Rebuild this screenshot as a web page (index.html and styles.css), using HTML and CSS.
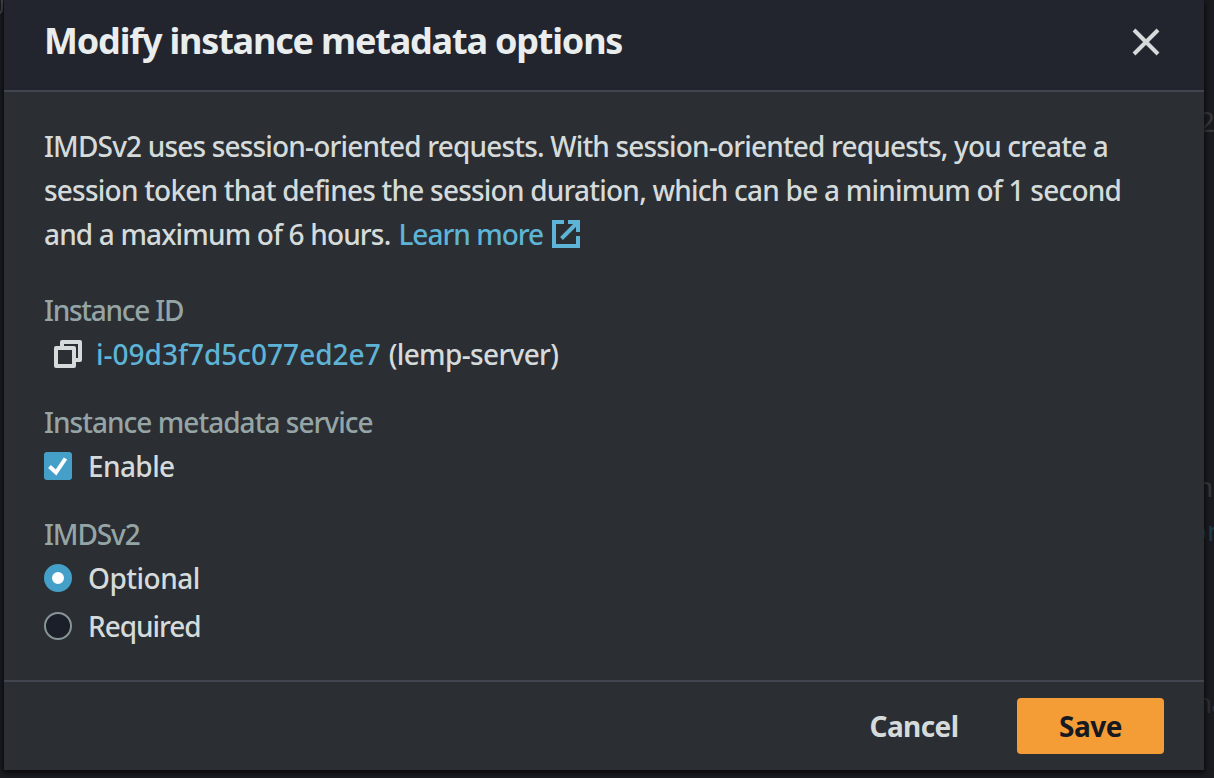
FILE: index.html
```html
<!DOCTYPE html>
<html lang="en">
<head>
<meta charset="utf-8">
<title>Modify instance metadata options</title>
<link rel="stylesheet" href="styles.css">
</head>
<body>
<div class="backdrop" aria-hidden="true">
  <span class="ghost ghost-corner"></span>
  <span class="ghost ghost-two">2</span>
  <span class="ghost ghost-n">n</span>
  <span class="ghost ghost-link">or</span>
  <span class="ghost ghost-na">na</span>
</div>
<main class="modal" role="dialog">
  <header class="modal-header">
    <h1 class="title"><span class="t-title">Modify instance metadata options</span></h1>
    <button class="close" aria-label="Close">
      <svg width="32" height="32" viewBox="0 0 32 32"><path d="M4 4 28 28M28 4 4 28" fill="none" stroke="currentColor" stroke-width="4"/></svg>
    </button>
  </header>
  <section class="modal-body">
    <p class="intro">
      <span class="line t-l1">IMDSv2 uses session-oriented requests. With session-oriented requests, you create a</span>
      <span class="line t-l2">session token that defines the session duration, which can be a minimum of 1 second</span>
      <span class="line last"><span class="t-l3">and a maximum of 6 hours.</span><a class="link learn"><span class="t-learn">Learn more</span><svg width="28" height="28" viewBox="0 0 28 28"><g fill="none" stroke="currentColor" stroke-width="4"><path d="M12 2H2V26H26V16"/><path d="M16 2H26V12M25 3 9.500 18.500"/></g></svg></a></span>
    </p>
    <div class="field">
      <div class="label"><span class="t-id">Instance ID</span></div>
      <div class="value">
        <svg class="copy" width="28" height="28" viewBox="0 0 28 28"><g fill="none" stroke="currentColor" stroke-width="4" stroke-linejoin="round"><path d="M2 8H20V26H2Z"/><path d="M8 8V2H26V20H20"/></g></svg>
        <a class="link t-iid">i-09d3f7d5c077ed2e7</a><span class="server t-server">(lemp-server)</span>
      </div>
    </div>
    <div class="field">
      <div class="label"><span class="t-ims">Instance metadata service</span></div>
      <div class="choice">
        <svg width="28" height="28" viewBox="0 0 28 28"><rect width="28" height="28" rx="3" fill="#44a0c8"/><path d="M5.500 14.500 12 20.500 21.500 6.500" fill="none" stroke="#fff" stroke-width="4"/></svg>
        <span class="t-enable">Enable</span>
      </div>
    </div>
    <div class="field">
      <div class="label"><span class="t-imds">IMDSv2</span></div>
      <div class="choice">
        <span class="radio checked"></span>
        <span class="t-opt">Optional</span>
      </div>
      <div class="choice spaced">
        <span class="radio"></span>
        <span class="t-req">Required</span>
      </div>
    </div>
  </section>
  <footer class="modal-footer">
    <button class="cancel"><span class="t-cancel">Cancel</span></button>
    <button class="save"><span class="t-save">Save</span></button>
  </footer>
</main>
</body>
</html>
```
FILE: styles.css
```css
* { box-sizing: border-box; }
body {
  margin: 0;
  width: 1214px;
  height: 778px;
  overflow: hidden;
  background: #1b1c21;
  color: #d5dbdb;
  font: 500 28px/44px "Noto Sans", "Open Sans", sans-serif;
}
button { margin: 0; padding: 0; border: 0; background: none; color: inherit; font: inherit; }
svg { display: block; flex: none; }
span, a { white-space: nowrap; }

.ghost { position: absolute; color: #36393c; font-weight: 400; }
.ghost-corner { left: -13px; top: -10px; width: 16px; height: 25px; border: 2px solid #45484a; border-radius: 6px; }
.ghost-two { left: 1199px; top: 99px; }
.ghost-n { left: 1196px; top: 464px; }
.ghost-link { left: 1190px; top: 508px; color: #203b46; }
.ghost-na { left: 1195px; top: 680px; color: #2b3134; letter-spacing: -1px; }

.modal {
  position: relative;
  display: flex;
  flex-direction: column;
  width: 1200px;
  height: 770px;
  margin-left: 4px;
  background: #2b2e33;
  box-shadow: 0 2px 6px 1px rgba(0, 0, 0, .7);
}
.modal-header {
  display: flex;
  justify-content: space-between;
  height: 92px;
  padding: 18px 42px 0 40px;
  border-bottom: 2px solid #414550;
  background: #22252d;
}
.title { margin: 0; color: #eaeded; font-size: 36px; line-height: 46px; font-weight: 700; }
.close { width: 32px; height: 32px; margin-top: 8px; }

.modal-body { flex: 1; padding: 32px 40px 0; }
.intro { margin: 0 0 32px; }
.line { display: block; }
.last, .learn, .value, .choice { display: flex; align-items: center; }
.last { gap: 8px; }
.learn { gap: 9px; }
.link { color: #5eb4d6; }
.field { margin-bottom: 24px; }
.label { color: #95a5a6; }
.label, .value, .choice { height: 44px; }
.copy { margin: 0 14px 0 10px; }
.server { margin-left: 8px; }
.choice { gap: 16px; }
.spaced { margin-top: 4px; }
.radio { width: 28px; height: 28px; border: 2px solid #879596; border-radius: 50%; background: #1a1f29; }
.radio.checked { border: 8px solid #44a0c8; background: #fff; }

.modal-footer {
  display: flex;
  justify-content: flex-end;
  height: 90px;
  padding: 16px 40px 0 0;
  border-top: 2px solid #414550;
}
.modal-footer button { font-weight: 700; }
.cancel { width: 148px; height: 56px; margin-right: 29px; }
.save { width: 147px; height: 56px; border-radius: 4px; background: #f49d37; color: #16191f; }

/* Tracking per text run */
.t-title { letter-spacing: -1.19px; }
.t-l1 { letter-spacing: -.83px; }
.t-l2 { letter-spacing: -.78px; }
.t-l3 { letter-spacing: -.85px; }
.t-learn { letter-spacing: -1px; }
.t-server { letter-spacing: -.65px; }
.t-id { letter-spacing: -1.25px; }
.t-ims { letter-spacing: -.97px; }
.t-imds { letter-spacing: -1.1px; }
.t-enable { letter-spacing: -.6px; }
.t-opt { letter-spacing: -.5px; }
.t-req { letter-spacing: -1.050px; }
.t-cancel { letter-spacing: -.6px; }
.t-save { letter-spacing: -.5px; }
```
